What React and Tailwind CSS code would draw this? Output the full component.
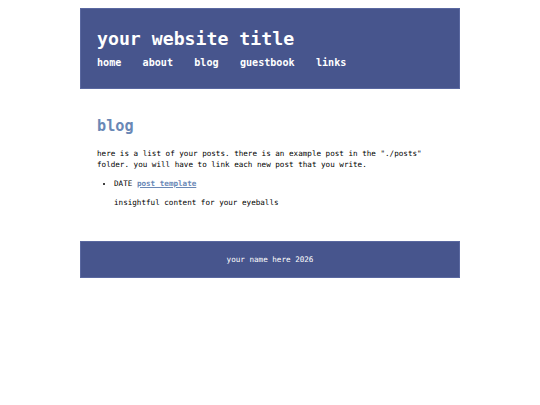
export default function App() {
  const links = ["home", "about", "blog", "guestbook", "links"];

  return (
    <div className="min-h-[405px] bg-white font-['DejaVu_Sans_Mono',monospace] text-black">
      <div className="mx-auto w-[380px] pt-[8px]">
        <header className="border border-[#5a68a0] bg-[#47558d] px-[16px] pt-[19px] pb-[19px] text-white">
          <h1 className="text-[18.2px] font-bold leading-[21px]">your website title</h1>
          <nav className="mt-[8px] flex gap-[21.3px] text-[10.1px] font-bold leading-[12px]">
            {links.map((link) => (
              <a key={link} href="#">
                {link}
              </a>
            ))}
          </nav>
        </header>

        <main className="px-[17px] pt-[28px] pb-[33px]">
          <h2 className="text-[15.2px] font-bold leading-[18px] text-[#6a88b6]">blog</h2>
          <p className="mt-[13px] text-[7.6px] leading-[11px]">
            here is a list of your posts. there is an example post in the "./posts" folder. you will have
            to link each new post that you write.
          </p>
          <ul className="mt-[8px] list-disc pl-[17px] text-[7.6px] leading-[11px]">
            <li>
              DATE{" "}
              <a href="#" className="font-bold text-[#6a88b6] underline">
                post template
              </a>
              <p className="mt-[8px]">insightful content for your eyeballs</p>
            </li>
          </ul>
        </main>

        <footer className="border border-[#5a68a0] bg-[#47558d] py-[12px] text-center text-[7.6px] leading-[11px] text-white">
          your name here 2026
        </footer>
      </div>
    </div>
  );
}
